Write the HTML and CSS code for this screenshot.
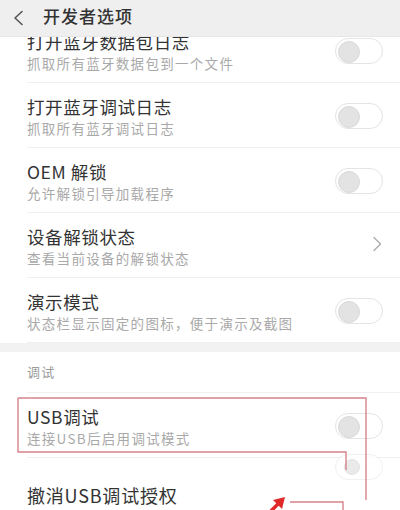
FILE: index.html
```html
<!DOCTYPE html>
<html lang="zh-CN">
<head>
<meta charset="utf-8">
<title>开发者选项</title>
<link rel="stylesheet" href="styles.css">
</head>
<body>
<div class="screen">
  <header class="topbar">
    <svg class="back" width="12" height="16" viewBox="0 0 12 16"><path d="M10 1.5 L3 8 L10 14.5" fill="none" stroke="#555" stroke-width="1.6" stroke-linecap="round" stroke-linejoin="round"/></svg>
    <h1 class="page-title">开发者选项</h1>
  </header>
  <main class="list">
    <section class="group">
      <div class="item">
        <div class="text"><div class="title">打开蓝牙数据包日志</div><div class="sub">抓取所有蓝牙数据包到一个文件</div></div>
        <span class="switch"></span>
      </div>
      <div class="item">
        <div class="text"><div class="title">打开蓝牙调试日志</div><div class="sub">抓取所有蓝牙调试日志</div></div>
        <span class="switch"></span>
      </div>
      <div class="item">
        <div class="text"><div class="title">OEM 解锁</div><div class="sub">允许解锁引导加载程序</div></div>
        <span class="switch"></span>
      </div>
      <div class="item">
        <div class="text"><div class="title">设备解锁状态</div><div class="sub">查看当前设备的解锁状态</div></div>
        <svg class="chev" width="10" height="16" viewBox="0 0 10 16"><path d="M2 1.5 L8.5 8 L2 14.5" fill="none" stroke="#aaa" stroke-width="1.3" stroke-linecap="round" stroke-linejoin="round"/></svg>
      </div>
      <div class="item">
        <div class="text"><div class="title">演示模式</div><div class="sub">状态栏显示固定的图标，便于演示及截图</div></div>
        <span class="switch"></span>
      </div>
    </section>
    <div class="gap"></div>
    <div class="section-label">调试</div>
    <section class="group">
      <div class="item">
        <div class="text"><div class="title">USB调试</div><div class="sub">连接USB后启用调试模式</div></div>
        <span class="switch"></span>
      </div>
      <div class="item single">
        <div class="title">撤消USB调试授权</div>
        <span class="switch ghost"></span>
      </div>
    </section>
  </main>
  <svg class="annot" width="400" height="510" viewBox="0 0 400 510">
    <path d="M18 398 H366 V500" fill="none" stroke="#d8848b" stroke-width="1.4"/>
    <path d="M18 398 V452 H346 V470" fill="none" stroke="#d8848b" stroke-width="1.4"/>
    <path d="M290 502 H343 V510" fill="none" stroke="#d8848b" stroke-width="1.4"/>
    <path d="M270 512 L279 503" stroke="#e02a2a" stroke-width="3.5" stroke-linecap="round"/>
    <path d="M285 497 L273 500 L282 509 Z" fill="#e02a2a"/>
  </svg>
</div>
</body>
</html>
```
FILE: styles.css
```css
* { box-sizing: border-box; }
html, body { margin: 0; padding: 0; background: #fff; }
body { font-family: "Noto Sans CJK SC", "Noto Sans", sans-serif; color: #333; }

.screen {
  position: relative;
  width: 400px;
  height: 510px;
  overflow: hidden;
  background: #fff;
}

.topbar {
  position: relative;
  z-index: 2;
  height: 37px;
  background: #efefef;
  display: flex;
  align-items: center;
  padding-left: 12px;
  gap: 19px;
  border-bottom: 1px solid #e6e6e6;
}
.back { display: block; }
.page-title {
  margin: 0;
  font-size: 17px;
  font-weight: 500;
  letter-spacing: 1px;
  color: #333;
  line-height: 22px;
  margin-top: -4px;
}

.list {
  margin-top: -19px;
  position: relative;
  z-index: 1;
}

.item {
  position: relative;
  display: flex;
  align-items: center;
  justify-content: space-between;
  height: 65px;
  margin-left: 27px;
  padding-right: 17px;
  border-bottom: 1px solid #efefef;
}
.text {
  align-self: flex-start;
  padding-top: 13px;
}
.title {
  font-size: 17.5px;
  letter-spacing: 0.6px;
  line-height: 22px;
  color: #333;
  white-space: nowrap;
}
.sub {
  font-size: 13.5px;
  letter-spacing: 1.3px;
  line-height: 20px;
  color: #a9a9a9;
  white-space: nowrap;
}

.switch {
  position: relative;
  flex: none;
  width: 48px;
  height: 26px;
  border: 1.5px solid #e4e4e4;
  border-radius: 13px;
  background: #fff;
  margin-top: 2px;
}
.switch::before {
  content: "";
  position: absolute;
  left: 2px;
  top: 1.5px;
  width: 20px;
  height: 20px;
  border-radius: 50%;
  background: #e3e3e3;
  border: 1px solid #d9d9d9;
}

.chev { flex: none; margin-right: 1px; margin-top: -2px; }

.gap {
  height: 9px;
  background: #f2f2f2;
}

.section-label {
  height: 41px;
  margin-left: 27px;
  font-size: 13px;
  letter-spacing: 1.2px;
  line-height: 40px;
  color: #9c9c9c;
  border-bottom: 1px solid #efefef;
}

.item.single {
  height: 72px;
  border-bottom: none;
}
.item.single .title { font-size: 18px; letter-spacing: 0.8px; margin-top: 2px; }
.switch.ghost {
  position: absolute;
  right: 17px;
  top: -6px;
  opacity: 0.75;
  border-color: #ececec;
}
.switch.ghost::before {
  left: 8px;
  top: 4px;
  width: 14px;
  height: 14px;
}

.annot {
  position: absolute;
  left: 0;
  top: 0;
  z-index: 5;
  pointer-events: none;
}
```
